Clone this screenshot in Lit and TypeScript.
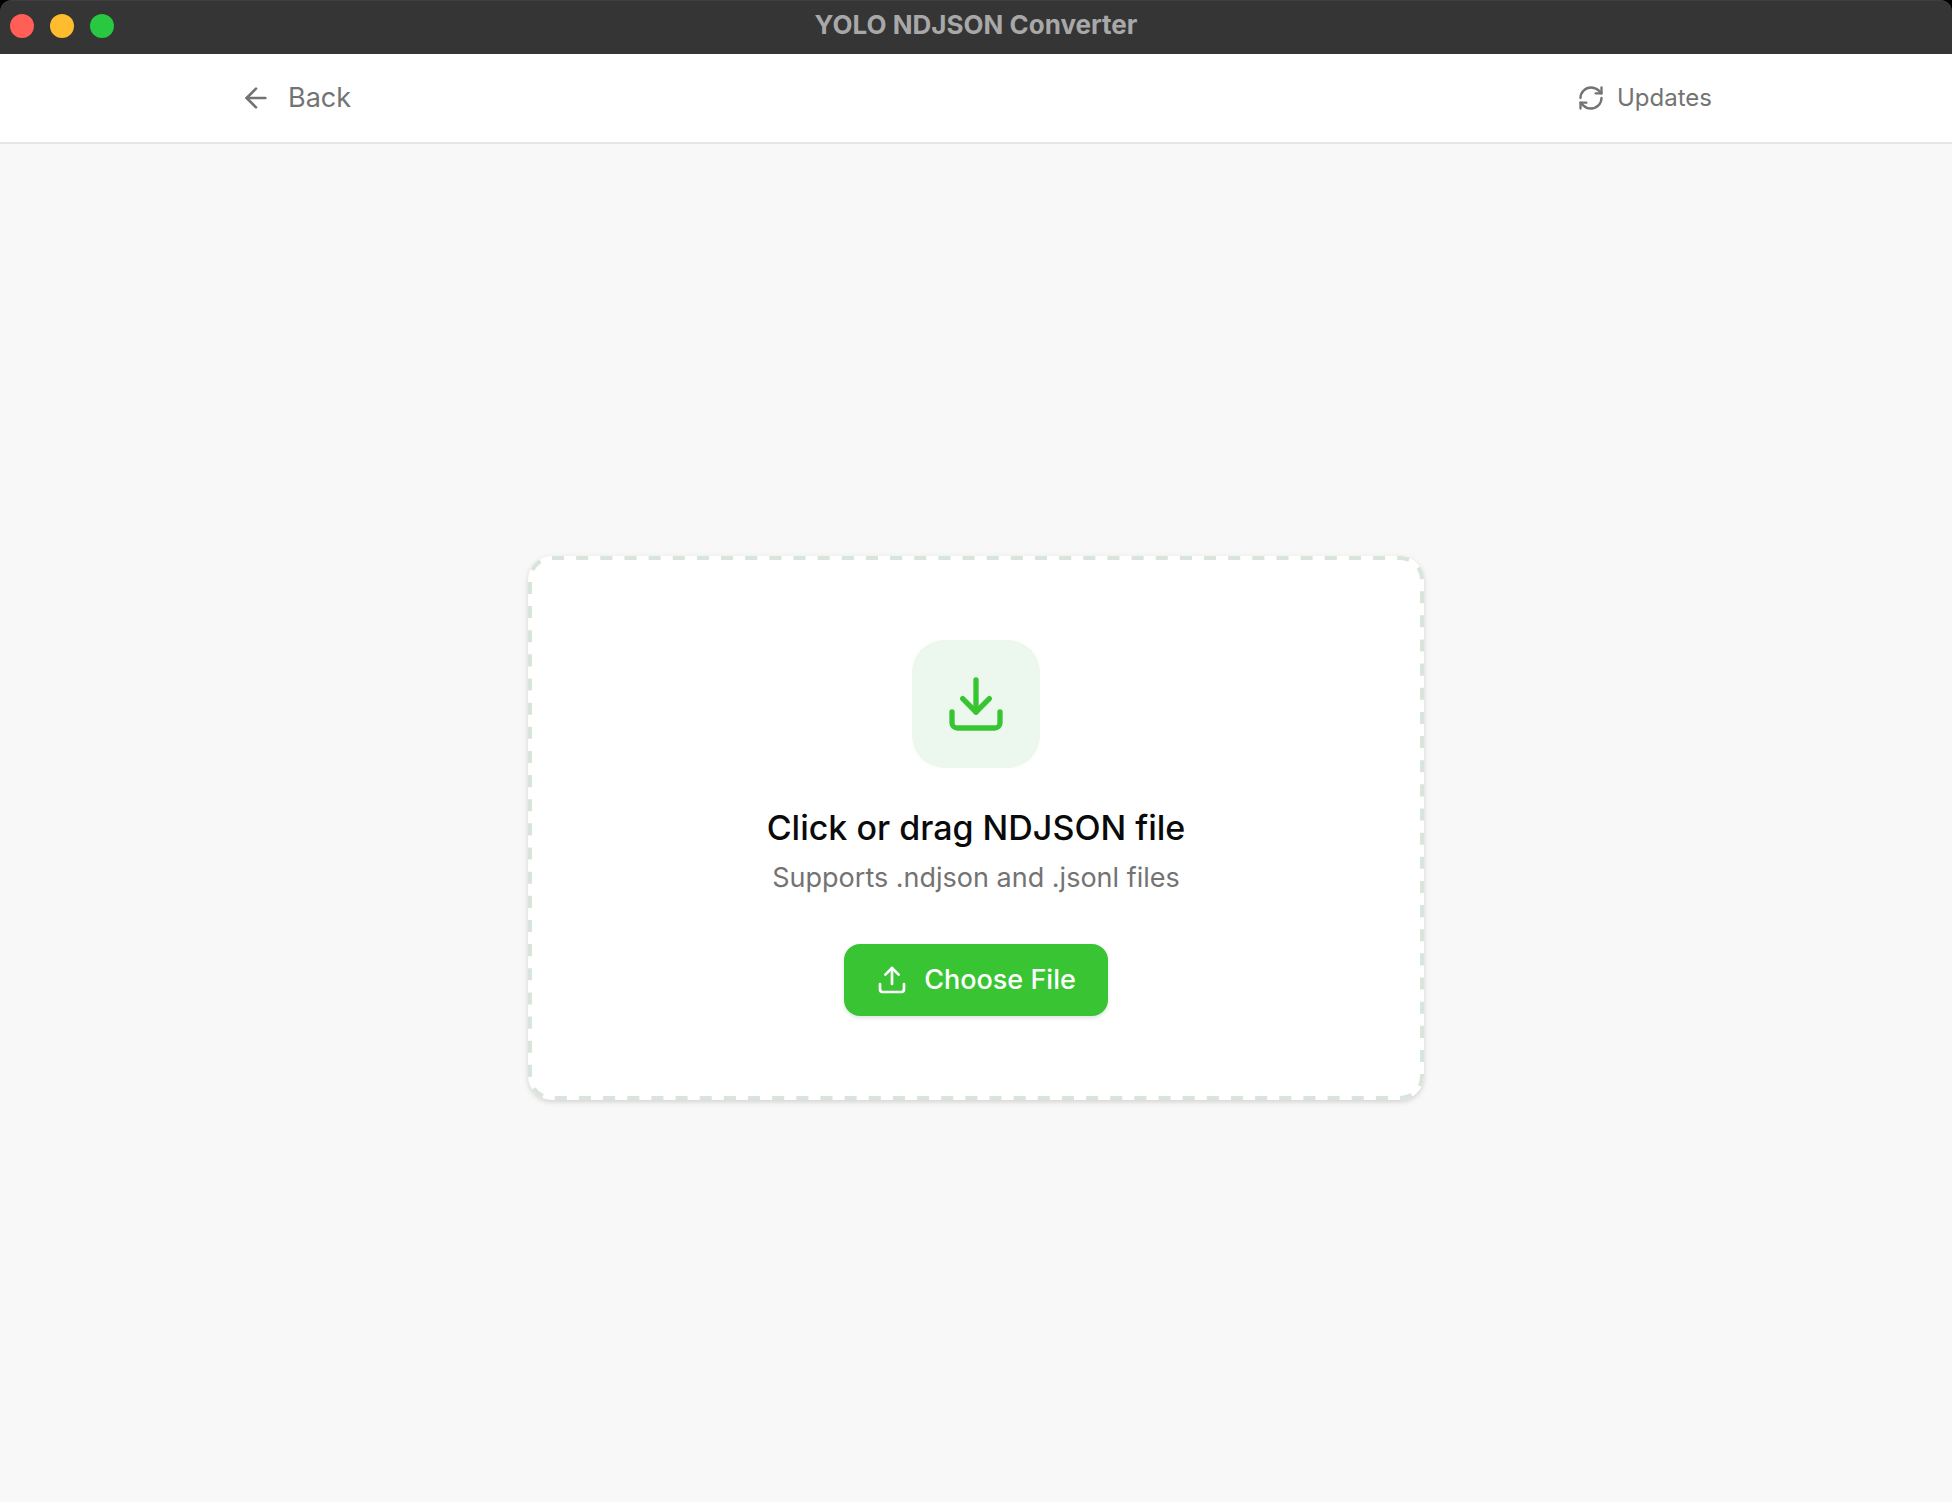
import { LitElement, html, css, svg } from "lit";
import { customElement } from "lit/decorators.js";

const icon = (name: string, body: unknown) => html`
  <svg class="icon ${name}" viewBox="0 0 24 24" aria-hidden="true">${body}</svg>
`;

const arrowLeft = svg`<path d="m12 19-7-7 7-7" /><path d="M19 12H5" />`;
const refresh = svg`
  <path d="M3 12a9 9 0 0 1 9-9 9.75 9.75 0 0 1 6.74 2.74L21 8" />
  <path d="M21 3v5h-5" />
  <path d="M21 12a9 9 0 0 1-9 9 9.75 9.75 0 0 1-6.74-2.74L3 16" />
  <path d="M8 16H3v5" />`;
const download = svg`
  <path d="M21 15v4a2 2 0 0 1-2 2H5a2 2 0 0 1-2-2v-4" />
  <path d="m7 10 5 5 5-5" />
  <path d="M12 15V3" />`;
const upload = svg`
  <path d="M21 15v4a2 2 0 0 1-2 2H5a2 2 0 0 1-2-2v-4" />
  <path d="m17 8-5-5-5 5" />
  <path d="M12 3v12" />`;

@customElement("app-root")
export class AppRoot extends LitElement {
  static styles = css`
    :host {
      display: flex;
      flex-direction: column;
      min-height: 100vh;
      background: #f8f8f8;
      color: #0a0a0a;
      font-family: Inter, "Liberation Sans", sans-serif;
    }
    * {
      box-sizing: border-box;
    }
    button {
      display: flex;
      align-items: center;
      margin: 0;
      padding: 0;
      border: 0;
      background: none;
      color: inherit;
      font: inherit;
      cursor: pointer;
    }
    .icon {
      flex: none;
      fill: none;
      stroke: currentColor;
      stroke-width: 2;
      stroke-linecap: round;
      stroke-linejoin: round;
    }
    .frame {
      background: #000;
    }
    .titlebar {
      display: grid;
      grid-template-columns: 1fr auto 1fr;
      align-items: center;
      height: 54px;
      padding: 0 10px 4px;
      border-radius: 12px 12px 0 0;
      background: #353535;
      box-shadow: inset 0 1px 0 #3e3e3e;
    }
    .lights {
      display: flex;
      gap: 16px;
      padding-top: 2px;
    }
    .light {
      width: 24px;
      height: 24px;
      border-radius: 50%;
    }
    .close {
      background: #ff5f57;
    }
    .minimize {
      background: #febc2e;
    }
    .zoom {
      background: #28c840;
    }
    .title {
      margin: 0;
      color: #a8a8a8;
      font-size: 26px;
      font-weight: 700;
      line-height: 32px;
    }
    .header {
      border-bottom: 2px solid #e5e5e5;
      background: #fff;
      color: #737373;
    }
    .toolbar {
      display: flex;
      align-items: center;
      justify-content: space-between;
      max-width: 1536px;
      height: 88px;
      margin: 0 auto;
      padding: 0 32px;
    }
    .back {
      gap: 16px;
      font-size: 27px;
      line-height: 40px;
    }
    .updates {
      gap: 12px;
      font-size: 24px;
      line-height: 32px;
    }
    .arrow,
    .upload {
      width: 32px;
      height: 32px;
    }
    .refresh {
      width: 28px;
      height: 28px;
    }
    .download {
      width: 64px;
      height: 64px;
    }
    .main {
      display: flex;
      flex: 1;
      align-items: center;
      justify-content: center;
      padding: 40px 32px 30px;
    }
    .dropzone {
      position: relative;
      display: flex;
      flex-direction: column;
      align-items: center;
      width: 100%;
      max-width: 896px;
      padding: 84px;
      border-radius: 24px;
      background: #fff;
      box-shadow: 0 2px 6px rgb(0 0 0 / 10%), 0 2px 4px rgb(0 0 0 / 6%);
    }
    .outline {
      position: absolute;
      inset: 0;
      width: 100%;
      height: 100%;
      pointer-events: none;
    }
    .dashes {
      x: 2px;
      y: 2px;
      width: calc(100% - 4px);
      height: calc(100% - 4px);
      rx: 22px;
      fill: none;
      stroke: #d9e5da;
      stroke-width: 4px;
      stroke-dasharray: 1 1;
    }
    .badge {
      display: grid;
      place-items: center;
      width: 128px;
      height: 128px;
      margin-bottom: 40px;
      border-radius: 32px;
      background: #ecf8ed;
      color: #39c533;
    }
    .heading {
      margin: 0 0 8px;
      font-size: 34px;
      font-weight: 500;
      line-height: 40px;
    }
    .hint {
      margin: 0 0 44px;
      color: #737373;
      font-size: 27px;
      line-height: 44px;
    }
    .choose {
      gap: 16px;
      height: 72px;
      padding: 0 32px;
      border-radius: 16px;
      background: #39c533;
      box-shadow: 0 2px 4px rgb(0 0 0 / 12%);
      color: #fff;
      font-size: 27px;
      font-weight: 500;
      line-height: 40px;
    }
  `;

  render() {
    return html`
      <div class="frame">
        <div class="titlebar">
          <div class="lights">
            <button class="light close" aria-label="Close"></button>
            <button class="light minimize" aria-label="Minimize"></button>
            <button class="light zoom" aria-label="Zoom"></button>
          </div>
          <h1 class="title">YOLO NDJSON Converter</h1>
        </div>
      </div>
      <header class="header">
        <div class="toolbar">
          <button class="back">${icon("arrow", arrowLeft)}Back</button>
          <button class="updates">${icon("refresh", refresh)}Updates</button>
        </div>
      </header>
      <main class="main">
        <section class="dropzone">
          <svg class="outline" aria-hidden="true">
            <rect class="dashes" pathLength="234" />
          </svg>
          <div class="badge">${icon("download", download)}</div>
          <h2 class="heading">Click or drag NDJSON file</h2>
          <p class="hint">Supports .ndjson and .jsonl files</p>
          <button class="choose">${icon("upload", upload)}Choose File</button>
        </section>
      </main>
    `;
  }
}
